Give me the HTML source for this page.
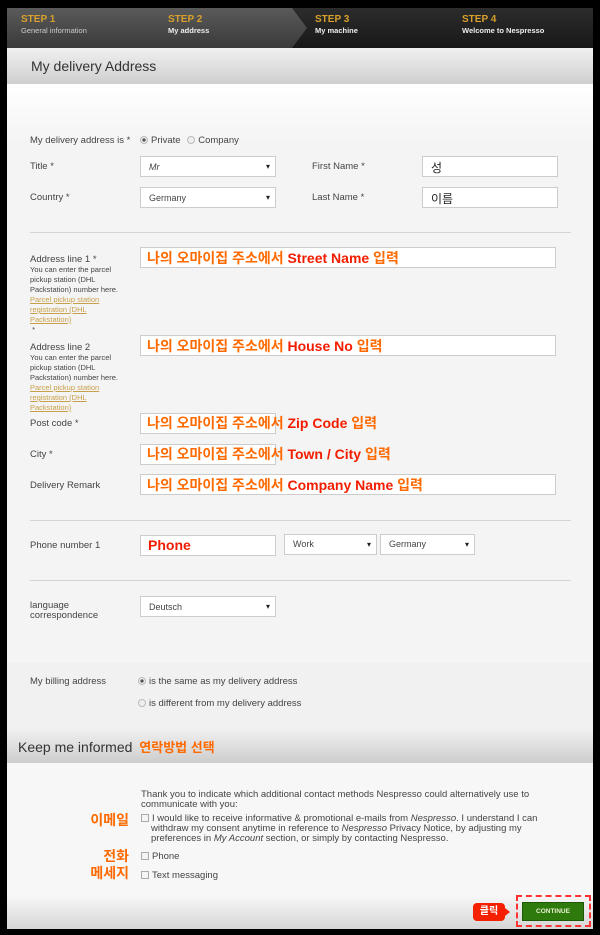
<!DOCTYPE html>
<html><head><meta charset="utf-8">
<style>
*{margin:0;padding:0;box-sizing:border-box}
body{width:600px;height:935px;background:#000;position:relative;overflow:hidden;font-family:"Liberation Sans","Noto Sans CJK KR",sans-serif;color:#444}
.a{position:absolute}
#main{left:7px;top:8px;width:586px;height:921px;background:#f4f4f4;overflow:hidden}
.steps{left:0;top:0;width:586px;height:40px;background:linear-gradient(#2c2c2c,#181818)}
.st{position:absolute;top:6px;font-size:10px;font-weight:bold;color:#d8a02c}
.st span{display:block;font-size:7.5px;color:#eee;margin-top:1px;font-weight:bold}
.lbl{position:absolute;font-size:9.5px;color:#444}
.small{font-size:7.5px;line-height:10px;color:#444}
.lnk{color:#c9a04a;text-decoration:underline}
.box{position:absolute;background:#fff;border:1px solid #ccc;height:21px;font-size:9px;padding:5px 0 0 8px;color:#444}
.sel::after{content:"▾";position:absolute;right:5px;top:5px;font-size:8px;color:#222}
.ann{position:absolute;font-weight:bold;font-size:14px;color:#ff6a00}
.ann b{color:#f21d00}
.hr{position:absolute;left:23px;width:541px;height:1px;background:#d4d4d4}
.rad{display:inline-block;width:8px;height:8px;border-radius:50%;border:1px solid #bbb;background:#eee;vertical-align:-1px;margin-right:3px}
.rad.on{background:radial-gradient(#555 35%,#eee 45%)}
.cb{display:inline-block;width:8px;height:8px;border:1px solid #aaa;background:#f4f4f4;vertical-align:-1px;margin-right:3px}
.kor{position:absolute;font-weight:bold;font-size:14px;color:#ff6a00;text-align:right;line-height:17px}
</style></head><body>
<div id="main" class="a">
 <div class="a steps">
  <div class="a" style="left:0;top:0;width:300px;height:40px;background:linear-gradient(#5a5a5a,#3a3a3a);clip-path:polygon(0 0,285px 0,300px 20px,285px 40px,0 40px)"></div>
  <div class="st" style="left:14px">STEP 1<span style="font-weight:normal;color:#ccc">General information</span></div>
  <div class="st" style="left:161px">STEP 2<span>My address</span></div>
  <div class="st" style="left:308px">STEP 3<span>My machine</span></div>
  <div class="st" style="left:455px">STEP 4<span>Welcome to Nespresso</span></div>
 </div>
 <div class="a" style="left:0;top:40px;width:586px;height:36px;background:linear-gradient(#f0f0f0,#cfcfcf)"></div>
 <div class="a" style="left:24px;top:50px;font-size:14px;color:#333">My delivery Address</div>
 <div class="a" style="left:0;top:76px;width:586px;height:60px;background:linear-gradient(#fff,#f4f4f4)"></div>

 <div class="lbl" style="left:23px;top:127px">My delivery address is *</div>
 <div class="lbl" style="left:133px;top:127px"><i class="rad on"></i>Private <i class="rad" style="margin-left:4px"></i>Company</div>
 <div class="lbl" style="left:23px;top:153px">Title *</div>
 <div class="box sel" style="left:133px;top:148px;width:136px"><i>Mr</i></div>
 <div class="lbl" style="left:305px;top:153px">First Name *</div>
 <div class="box" style="left:415px;top:148px;width:136px;font-size:12px;padding-top:2px;color:#222">성</div>
 <div class="lbl" style="left:23px;top:184px">Country *</div>
 <div class="box sel" style="left:133px;top:179px;width:136px">Germany</div>
 <div class="lbl" style="left:305px;top:184px">Last Name *</div>
 <div class="box" style="left:415px;top:179px;width:136px;font-size:12px;padding-top:2px;color:#222">이름</div>
 <div class="hr" style="top:224px"></div>

 <div class="lbl" style="left:23px;top:246px">Address line 1 *<div class="small">You can enter the parcel<br>pickup station (DHL<br>Packstation) number here.<br><span class="lnk">Parcel pickup station<br>registration (DHL<br>Packstation)</span><br>&nbsp;*</div></div>
 <div class="box" style="left:133px;top:239px;width:416px"></div>
 <div class="ann" style="left:140px;top:240px">나의 오마이집 주소에서 <b>Street Name</b> 입력</div>

 <div class="lbl" style="left:23px;top:334px">Address line 2<div class="small">You can enter the parcel<br>pickup station (DHL<br>Packstation) number here.<br><span class="lnk">Parcel pickup station<br>registration (DHL<br>Packstation)</span></div></div>
 <div class="box" style="left:133px;top:327px;width:416px"></div>
 <div class="ann" style="left:140px;top:328px">나의 오마이집 주소에서 <b>House No</b> 입력</div>

 <div class="lbl" style="left:23px;top:410px">Post code *</div>
 <div class="box" style="left:133px;top:405px;width:136px"></div>
 <div class="ann" style="left:140px;top:405px">나의 오마이집 주소에서 <b>Zip Code</b> 입력</div>
 <div class="lbl" style="left:23px;top:441px">City *</div>
 <div class="box" style="left:133px;top:436px;width:136px"></div>
 <div class="ann" style="left:140px;top:436px">나의 오마이집 주소에서 <b>Town / City</b> 입력</div>
 <div class="lbl" style="left:23px;top:472px">Delivery Remark</div>
 <div class="box" style="left:133px;top:466px;width:416px"></div>
 <div class="ann" style="left:140px;top:467px">나의 오마이집 주소에서 <b>Company Name</b> 입력</div>
 <div class="hr" style="top:512px"></div>

 <div class="lbl" style="left:23px;top:532px">Phone number 1</div>
 <div class="box" style="left:133px;top:527px;width:136px"></div>
 <div class="ann" style="left:141px;top:529px"><b>Phone</b></div>
 <div class="box sel" style="left:277px;top:526px;width:93px;padding-top:4px">Work</div>
 <div class="box sel" style="left:373px;top:526px;width:95px;padding-top:4px">Germany</div>
 <div class="hr" style="top:572px"></div>

 <div class="lbl" style="left:23px;top:593px;line-height:10px">language<br>correspondence</div>
 <div class="box sel" style="left:133px;top:588px;width:136px">Deutsch</div>

 <div class="a" style="left:0;top:655px;width:586px;height:64px;background:#f1f1f1"></div>
 <div class="lbl" style="left:23px;top:668px">My billing address</div>
 <div class="lbl" style="left:131px;top:668px"><i class="rad on"></i>is the same as my delivery address</div>
 <div class="lbl" style="left:131px;top:690px"><i class="rad"></i>is different from my delivery address</div>

 <div class="a" style="left:0;top:719px;width:586px;height:36px;background:linear-gradient(#f2f2f2,#cdcdcd)"></div>
 <div class="a" style="left:11px;top:729px;font-size:14px;color:#333">Keep me informed <span style="color:#ff6a00;font-weight:bold;font-size:13px;margin-left:3px">연락방법 선택</span></div>
 <div class="a" style="left:0;top:755px;width:586px;height:130px;background:#f7f7f7"></div>
 <div class="lbl" style="left:134px;top:782px;line-height:10px;width:405px">Thank you to indicate which additional contact methods Nespresso could alternatively use to communicate with you:</div>
 <div class="lbl" style="left:134px;top:806px;line-height:10px;width:410px;padding-left:10px;text-indent:-10px"><i class="cb"></i>I would like to receive informative &amp; promotional e-mails from <i>Nespresso</i>. I understand I can withdraw my consent anytime in reference to <i>Nespresso</i> Privacy Notice, by adjusting my preferences in <i>My Account</i> section, or simply by contacting Nespresso.</div>
 <div class="lbl" style="left:134px;top:843px"><i class="cb"></i>Phone</div>
 <div class="lbl" style="left:134px;top:862px"><i class="cb"></i>Text messaging</div>
 <div class="kor" style="left:60px;top:804px;width:62px">이메일</div>
 <div class="kor" style="left:60px;top:840px;width:62px">전화<br>메세지</div>

 <div class="a" style="left:0;top:885px;width:586px;height:36px;background:linear-gradient(#fafafa,#d6d6d6)"></div>
 <div class="a" style="left:509px;top:887px;width:75px;height:32px;border:2px dashed #f33"></div>
 <div class="a" style="left:515px;top:894px;width:62px;height:19px;background:#2e7a0c;border:1px solid #1e5a05;color:#e8f0d0;font-size:6.5px;font-weight:bold;text-align:center;line-height:17px">CONTINUE</div>
 <div class="a" style="left:466px;top:895px;width:32px;height:18px;background:#f42000;border-radius:4px;color:#fff;font-size:10px;font-weight:bold;text-align:center;line-height:18px">클릭</div>
 <div class="a" style="left:498px;top:900px;width:0;height:0;border-top:4px solid transparent;border-bottom:4px solid transparent;border-left:5px solid #f42000"></div>
</div>
</body></html>
